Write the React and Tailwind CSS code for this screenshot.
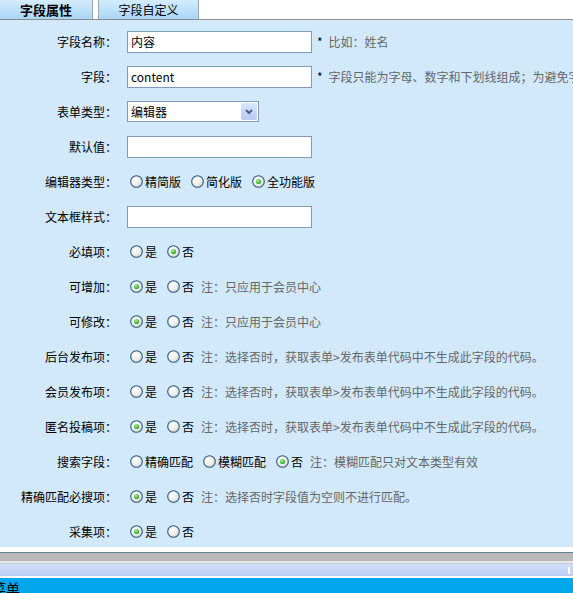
import React from "react";

const font = { fontFamily: '"Noto Sans CJK SC", "Liberation Sans", sans-serif' };

function Radio({ checked }) {
  return (
    <svg width="13" height="13" viewBox="0 0 13 13" className="shrink-0">
      <defs>
        <radialGradient id="rb" cx="0.35" cy="0.3" r="0.8">
          <stop offset="0" stopColor="#ffffff" />
          <stop offset="0.6" stopColor="#eeece6" />
          <stop offset="1" stopColor="#cfcbc0" />
        </radialGradient>
        <radialGradient id="rd" cx="0.4" cy="0.35" r="0.7">
          <stop offset="0" stopColor="#a8f08a" />
          <stop offset="1" stopColor="#21a121" />
        </radialGradient>
      </defs>
      <circle cx="6.5" cy="6.5" r="5.8" fill="url(#rb)" stroke="#2a5a86" strokeWidth="1.1" />
      {checked && <circle cx="6.5" cy="6.5" r="2.6" fill="url(#rd)" />}
    </svg>
  );
}

function Options({ items, value, note }) {
  return (
    <div className="flex items-center pl-[3px] whitespace-nowrap">
      {items.map((t) => (
        <label key={t} className="flex items-center gap-[2px] mr-[10px]">
          <Radio checked={t === value} />
          <span>{t}</span>
        </label>
      ))}
      {note && <span className="text-[#666] -ml-[3px]">{note}</span>}
    </div>
  );
}

function TextInput({ value }) {
  return (
    <div className="w-[185px] h-[22px] border border-[#7f9db9] bg-white px-[3px] leading-[20px] text-[12px]">
      {value}
    </div>
  );
}

function Hint({ text }) {
  return (
    <span className="ml-[5px] whitespace-nowrap">
      <span className="text-black">*</span>
      <span className="text-[#666] ml-[6px]">{text}</span>
    </span>
  );
}

const yesNo = ["是", "否"];

const rows = [
  { label: "字段名称：", field: <div className="flex items-center"><TextInput value="内容" /><Hint text="比如：姓名" /></div> },
  { label: "字段：", field: <div className="flex items-center"><TextInput value="content" /><Hint text="字段只能为字母、数字和下划线组成；为避免字段名与系统字段冲突，请加前缀" /></div> },
  {
    label: "表单类型：",
    field: (
      <div className="w-[132px] h-[21px] border border-[#7f9db9] bg-white flex items-center">
        <span className="flex-1 pl-[3px]">编辑器</span>
        <span className="w-[16px] h-[17px] mr-[1px] rounded-[2px] bg-gradient-to-b from-[#dbe6fd] to-[#b7c9f5] flex items-center justify-center">
          <svg width="8" height="6" viewBox="0 0 8 6">
            <path d="M1 1 L4 4 L7 1" fill="none" stroke="#4d6185" strokeWidth="2" />
          </svg>
        </span>
      </div>
    ),
  },
  { label: "默认值：", field: <TextInput value="" /> },
  { label: "编辑器类型：", field: <Options items={["精简版", "简化版", "全功能版"]} value="全功能版" /> },
  { label: "文本框样式：", field: <TextInput value="" /> },
  { label: "必填项：", field: <Options items={yesNo} value="否" /> },
  { label: "可增加：", field: <Options items={yesNo} value="是" note="注：只应用于会员中心" /> },
  { label: "可修改：", field: <Options items={yesNo} value="是" note="注：只应用于会员中心" /> },
  { label: "后台发布项：", field: <Options items={yesNo} value={null} note="注：选择否时，获取表单>发布表单代码中不生成此字段的代码。" /> },
  { label: "会员发布项：", field: <Options items={yesNo} value={null} note="注：选择否时，获取表单>发布表单代码中不生成此字段的代码。" /> },
  { label: "匿名投稿项：", field: <Options items={yesNo} value="是" note="注：选择否时，获取表单>发布表单代码中不生成此字段的代码。" /> },
  { label: "搜索字段：", field: <Options items={["精确匹配", "模糊匹配", "否"]} value="否" note="注：模糊匹配只对文本类型有效" /> },
  { label: "精确匹配必搜项：", field: <Options items={yesNo} value="是" note="注：选择否时字段值为空则不进行匹配。" /> },
  { label: "采集项：", field: <Options items={yesNo} value="是" /> },
];

export default function App() {
  return (
    <div className="w-[573px] h-[593px] overflow-hidden bg-white text-[12px] text-black flex flex-col" style={font}>
      {/* tabs */}
      <div className="h-[20px] flex border-b border-[#8c8c8c] shrink-0">
        <div className="w-[93px] h-[19px] border-r border-[#9aa6b0] bg-gradient-to-b from-[#d4ecfd] to-[#a9d6f7] flex items-center justify-center font-bold text-[13px]">
          字段属性
        </div>
        <div className="w-[5px]" />
        <div className="w-[101px] h-[19px] border-x border-[#9aa6b0] bg-gradient-to-b from-[#d4ecfd] to-[#a9d6f7] flex items-center justify-center">
          字段自定义
        </div>
      </div>

      {/* form */}
      <div className="h-[527px] shrink-0 bg-[#d2e9fc] pt-[4px] overflow-hidden">
        {rows.map((r) => (
          <div key={r.label} className="h-[35px] flex items-center">
            <div className="w-[118px] shrink-0 text-right pr-[1px] whitespace-nowrap">{r.label}</div>
            <div className="pl-[9px] whitespace-nowrap">{r.field}</div>
          </div>
        ))}
      </div>

      {/* bottom frame bars */}
      <div className="h-[5px] bg-white shrink-0" />
      <div className="h-[1px] bg-[#5e8593] shrink-0" />
      <div className="h-[8px] bg-[#b9b9b9] shrink-0" />
      <div className="h-[2px] bg-[#e9e9e1] shrink-0" />
      <div className="h-[1px] bg-[#c4cde6] shrink-0" />
      <div className="h-[12px] bg-gradient-to-b from-[#d3defb] to-[#bccdf6] shrink-0 flex justify-end">
        <span className="w-[2px] h-[7px] mt-[3px] mr-[3px] bg-white" />
      </div>
      <div className="h-[2px] bg-white shrink-0" />
      <div className="flex-1 bg-[#00a7ec] overflow-hidden">
        <span className="block -ml-[8px] text-[14px] leading-[16px] pt-[2px]">菜单</span>
      </div>
    </div>
  );
}
